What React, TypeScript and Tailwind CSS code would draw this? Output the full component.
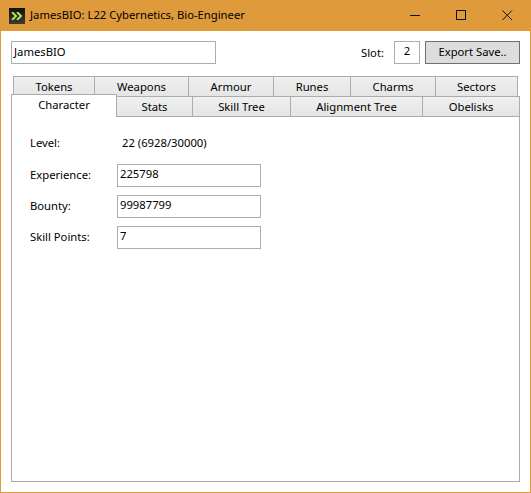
import React from "react";

const topTabs = [
  { label: "Tokens", w: "w-[82px]" },
  { label: "Weapons", w: "w-[95px]" },
  { label: "Armour", w: "w-[86px]" },
  { label: "Runes", w: "w-[78px]" },
  { label: "Charms", w: "w-[86px]" },
  { label: "Sectors", w: "w-[83px]" },
];

const bottomTabs = [
  { label: "Stats", w: "w-[77px]" },
  { label: "Skill Tree", w: "w-[99px]" },
  { label: "Alignment Tree", w: "w-[133px]" },
  { label: "Obelisks", w: "w-[98px]" },
];

const Tab = ({ label, w }: { label: string; w: string }) => (
  <div
    className={`${w} -ml-px first:ml-0 h-[21px] shrink-0 flex items-center justify-center pt-px border border-[#acacac] bg-gradient-to-b from-[#f0f0f0] to-[#e5e5e5]`}
  >
    {label}
  </div>
);

const Field = ({ label, value }: { label: string; value: string }) => (
  <div className="flex items-center h-[23px]">
    <span className="w-[105px] pl-[18px] shrink-0">{label}</span>
    <div className="w-[144px] h-[23px] border border-[#abadb3] pl-[2px] leading-[18px]">{value}</div>
  </div>
);

export default function App() {
  return (
    <div
      className="w-[531px] h-[493px] flex flex-col border border-t-0 border-[#df9a3b] bg-white text-[11.25px] text-black"
      style={{ fontFamily: '"Noto Sans", "Open Sans", sans-serif' }}
    >
      {/* title bar */}
      <div className="h-[31px] -mx-px bg-[#df9a3b] flex items-center shrink-0">
        <div className="ml-[9px] w-4 h-4 bg-gradient-to-b from-[#111] to-[#3a3a36] flex items-center justify-center">
          <svg width="12" height="8" viewBox="0 0 12 8">
            <path d="M1 0 L5 4 L1 8 M6 0 L10 4 L6 8" stroke="#b6e04a" strokeWidth="2" fill="none" />
          </svg>
        </div>
        <span className="ml-[5px]">JamesBIO: L22 Cybernetics, Bio-Engineer</span>
        <div className="ml-auto flex items-center mr-[18px]">
          <svg width="11" height="11" viewBox="0 0 11 11" className="mr-[35px]">
            <path d="M0 5.5 H10" stroke="#111" fill="none" />
          </svg>
          <svg width="11" height="11" viewBox="0 0 11 11" className="mr-[35px]">
            <rect x="0.5" y="0.5" width="9" height="9" stroke="#111" fill="none" />
          </svg>
          <svg width="11" height="11" viewBox="0 0 11 11">
            <path d="M0.5 0.5 L10 10 M10 0.5 L0.5 10" stroke="#111" fill="none" />
          </svg>
        </div>
      </div>

      {/* name and slot row */}
      <div className="flex items-start pl-[10px] pr-[10px] pt-[10px] shrink-0">
        <div className="w-[205px] h-[23px] border border-[#abadb3] px-[2px] leading-[20px]">JamesBIO</div>
        <span className="ml-auto mt-[4px]">Slot:</span>
        <div className="ml-[10px] w-[26px] h-[23px] border border-[#abadb3] text-center leading-[18px]">2</div>
        <div className="ml-[5px] w-[95px] h-[23px] border border-[#707070] bg-[#dddddd] text-center leading-[19px]">
          Export Save..
        </div>
      </div>

      {/* tabs */}
      <div className="flex pl-[12px] mt-[12px] shrink-0">
        {topTabs.map((t) => (
          <Tab key={t.label} label={t.label} w={t.w} />
        ))}
      </div>
      <div className="flex pl-[10px] -mt-px shrink-0 relative z-10">
        <div className="w-[106px] h-[23px] -mt-[2px] -mb-px border border-b-0 border-[#acacac] bg-white flex items-center justify-center pb-[2px] relative z-10">
          Character
        </div>
        <div className="flex -ml-px">
          {bottomTabs.map((t) => (
            <Tab key={t.label} label={t.label} w={t.w} />
          ))}
        </div>
      </div>

      {/* panel */}
      <div className="mx-[10px] mb-[10px] -mt-px flex-1 border border-[#acacac] pt-[17px]">
        <div className="flex items-center h-[18px]">
          <span className="w-[110px] pl-[18px] shrink-0">Level:</span>
          <span>22 (6928/30000)</span>
        </div>
        <div className="flex flex-col gap-[8px] mt-[12px]">
          <Field label="Experience:" value="225798" />
          <Field label="Bounty:" value="99987799" />
          <Field label="Skill Points:" value="7" />
        </div>
      </div>
    </div>
  );
}
